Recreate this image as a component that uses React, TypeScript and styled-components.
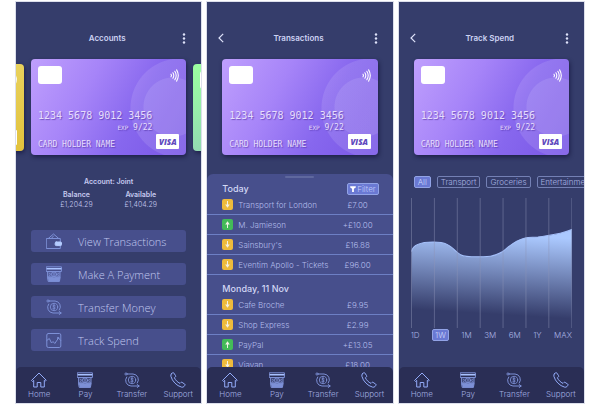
import React from "react";
import styled, { createGlobalStyle, css } from "styled-components";

const GlobalStyle = createGlobalStyle`
  *, *::before, *::after { box-sizing: border-box; }
  body {
    margin: 0;
    background: #ffffff;
    font-family: Inter, "Open Sans", sans-serif;
    color: #c5caf0;
  }
  h1, h2, ul, dl, dd, p { margin: 0; padding: 0; }
  button { font: inherit; color: inherit; cursor: pointer; }
`;

/* ---------- layout ---------- */

const Board = styled.main`
  display: grid;
  grid-template-columns: repeat(3, minmax(0, 1fr));
  gap: 6px;
  height: 100vh;
  min-height: 400px;
  padding: 2px 16px;
`;

const Phone = styled.section`
  display: flex;
  flex-direction: column;
  min-height: 0;
  overflow: hidden;
  background: #353d6b;
  box-shadow: 0 0 0 1px #dcdfeb;
`;

const Header = styled.header`
  display: grid;
  grid-template-columns: 16px 1fr 16px;
  align-items: center;
  flex: none;
  padding: 28px 9px 13px 6px;
`;

const Title = styled.h1`
  grid-column: 2;
  font-size: 8px;
  line-height: 16px;
  font-weight: 600;
  text-align: center;
  color: #cdd3f3;
`;

const IconButton = styled.button`
  display: flex;
  align-items: center;
  justify-content: center;
  height: 16px;
  padding: 0;
  border: 0;
  background: none;
  color: #dfe3fa;
`;

const Body = styled.div`
  display: flex;
  flex-direction: column;
  flex: 1;
  min-height: 0;
`;

/* ---------- bank card ---------- */

const Carousel = styled.div`
  display: flex;
  justify-content: center;
  align-items: center;
  flex: none;
  gap: 7px;
`;

type Tone = "violet" | "gold" | "mint";

const toneFill: Record<Tone, string> = {
  violet: "linear-gradient(118deg, #bf9ffd 0%, #a684f8 35%, #8767ee 65%, #7957e6 100%)",
  gold: "linear-gradient(150deg, #efe28a 0%, #e8d05a 50%, #e2c23c 100%)",
  mint: "linear-gradient(170deg, #9bffa0 0%, #97ecab 45%, #90cfb6 100%)",
};

const CardShell = styled.article<{ $tone: Tone; $peek?: boolean }>`
  display: grid;
  grid-template-columns: 1fr auto;
  grid-template-rows: auto 1fr auto;
  flex: none;
  width: ${(p) => (p.$peek ? "140px" : "calc(100% - 30px)")};
  height: ${(p) => (p.$peek ? "87px" : "96px")};
  padding: 7px 7px 6px;
  border-radius: 4px;
  overflow: hidden;
  color: #e6ddfb;
  font-family: "DejaVu Sans Mono", monospace;
  text-shadow: 1px 1px 1px rgba(60, 30, 140, 0.5);
  box-shadow: 1px 2px 4px rgba(20, 20, 60, 0.7);
  background: ${(p) =>
    p.$tone === "violet"
      ? `radial-gradient(circle 30px at 142px 48px, rgba(255,255,255,0.1) 97%, transparent),
         radial-gradient(circle 50px at 149px 49px, rgba(255,255,255,0.11) 98%, transparent),
         ${toneFill.violet}`
      : toneFill[p.$tone]};
`;

const Chip = styled.div`
  width: 24px;
  height: 18px;
  border-radius: 3px;
  background: #ffffff;
`;

const Wave = styled.div`
  display: flex;
  align-items: center;
  justify-content: flex-end;
  height: 18px;
`;

const CardDetails = styled.div`
  grid-column: 1 / -1;
  align-self: end;
  justify-self: start;
  padding-bottom: 1px;
  text-align: right;
`;

const CardNumber = styled.p`
  font-size: 10px;
  line-height: 12px;
  white-space: nowrap;
`;

const Expiry = styled.p`
  font-size: 8px;
  line-height: 11px;
  small { font-size: 6px; }
`;

const Holder = styled.p`
  align-self: end;
  font-size: 8px;
  line-height: 8px;
  white-space: nowrap;
`;

const Visa = styled.div`
  grid-column: 2;
  align-self: end;
  justify-self: end;
  width: 23px;
  height: 15px;
  border-radius: 1px;
  background: #ffffff;
  color: #6048bd;
  font: italic 800 8px/15px "Open Sans", sans-serif;
  text-align: center;
  text-shadow: none;
`;

function ContactlessIcon() {
  return (
    <svg width="9" height="13" viewBox="0 0 9 13" fill="none" stroke="#fff" strokeWidth="1.1" strokeLinecap="round" aria-hidden="true">
      <path d="M1 5.2q.9 1.3 0 2.6M2.9 3.8q1.8 2.7 0 5.4M4.8 2.3q2.8 4.2 0 8.4M6.6 .9q3.4 5.6 0 11.2" />
    </svg>
  );
}

function BankCard() {
  return (
    <CardShell $tone="violet">
      <Chip />
      <Wave><ContactlessIcon /></Wave>
      <CardDetails>
        <CardNumber>1234 5678 9012 3456</CardNumber>
        <Expiry><small>EXP</small> 9/22</Expiry>
      </CardDetails>
      <Holder>CARD HOLDER NAME</Holder>
      <Visa>VISA</Visa>
    </CardShell>
  );
}

function PeekCard({ tone }: { tone: Tone }) {
  return (
    <CardShell $tone={tone} $peek aria-hidden="true">
      <Chip />
      <Wave><ContactlessIcon /></Wave>
      <CardDetails />
      <Visa />
    </CardShell>
  );
}

/* ---------- icons ---------- */

const Glyph = styled.svg`
  display: block;
  flex: none;
  width: 16px;
  height: 16px;
  fill: none;
  stroke: #7d90d6;
  stroke-width: 1;
  stroke-linecap: round;
  stroke-linejoin: round;
`;

const HomeIcon = () => (
  <Glyph viewBox="0 0 16 16" aria-hidden="true">
    <path stroke="#93abf8" d="M.8 8.2 8 1l7.200 7.200-1 1-.9-.8V15H9.800v-4.500H6.200V15H2.700V8.400l-.9.8z" />
  </Glyph>
);

const PayIcon = () => (
  <Glyph viewBox="0 0 16 16" aria-hidden="true">
    <path d="M.6.8h14.800v4.700H.6z" />
    <path d="M1.200 2.800h13.600" stroke="#a9c2ff" strokeWidth="1.600" />
    <path d="M2 5.500h12v5.500H2z" fill="#7d90d6" fillOpacity=".25" />
    <path d="M1.800 11.200h2.700q3.500 1.600 7 0h2.700l-.8 4.200H2.600z" fill="#7d90d6" />
    <circle cx="8" cy="8.300" r="2.500" />
    <path d="M8 7v2.600M3.800 7.200q1.200 1.200 0 2.400M12.200 7.200q-1.200 1.200 0 2.400" />
  </Glyph>
);

const TransferIcon = () => (
  <Glyph viewBox="0 0 16 16" aria-hidden="true">
    <circle cx="8" cy="8" r="3.700" strokeWidth=".9" />
    <path d="M9.300 6.700Q8 5.600 7 6.500q-.6 1 1 1.500t1.100 1.500q-1.100.9-2.400-.1M8 5.400v5.200" strokeWidth=".8" />
    <circle cx="2" cy="2" r="1.100" strokeWidth=".9" />
    <path d="M3.200 2H9a5.700 5.700 0 0 1 4.300 9" />
    <path d="m13.200 12.500 2 1.500-2 1.500M15 14H7a5.700 5.700 0 0 1-4.300-9" />
  </Glyph>
);

const PhoneIcon = () => (
  <Glyph viewBox="0 0 16 16" aria-hidden="true">
    <path stroke="#93abf8" d="M1.300 1.900 2.700.8q.7-.4 1.200.3l1.700 2.600q.4.7-.2 1.200l-1 .8q.6 1.700 2.100 3.200t3.500 2.500l.9-.9q.6-.5 1.200-.1l2.600 1.700q.7.500.2 1.200l-1 1.300q-.8.900-2.400.5-3.600-1-6.600-4T.9 4.300Q.5 2.700 1.300 1.900z" />
  </Glyph>
);

const WalletIcon = () => (
  <Glyph viewBox="0 0 16 16" aria-hidden="true">
    <path d="M.7 5.500h13.600v10H.7zM2.500 5.300 7.500 1l5 4.300M5.500 5.300 7.500 3" />
    <rect x="9.200" y="9" width="6.300" height="3.600" rx="1" fill="#b4ccff" stroke="#b4ccff" />
  </Glyph>
);

const TrackIcon = () => (
  <Glyph viewBox="0 0 16 16" aria-hidden="true">
    <rect x=".8" y="1.500" width="14" height="14" rx="1.500" />
    <path d="m.8 8.500 2.500-2 2.200 4.500 1.500-1.500 1.800 2 3.700-5.500 2.200 2.500" />
    <circle cx="12" cy="6" r=".7" />
  </Glyph>
);

/* ---------- bottom navigation ---------- */

const NavBar = styled.nav`
  display: grid;
  grid-template-columns: repeat(4, 1fr);
  flex: none;
  margin-top: -5px;
  padding: 5px 0 3px;
  border-radius: 5px 5px 0 0;
  background: #2a2e55;
  position: relative;
  z-index: 1;
`;

const NavLink = styled.a`
  display: flex;
  flex-direction: column;
  align-items: center;
  gap: 1px;
  color: #a3aee0;
  font-size: 8px;
  line-height: 11px;
  font-weight: 300;
  text-decoration: none;
`;

function BottomNav() {
  return (
    <NavBar aria-label="Main">
      <NavLink href="#home"><HomeIcon />Home</NavLink>
      <NavLink href="#pay"><PayIcon />Pay</NavLink>
      <NavLink href="#transfer"><TransferIcon />Transfer</NavLink>
      <NavLink href="#support"><PhoneIcon />Support</NavLink>
    </NavBar>
  );
}

function TopBar({ title, back }: { title: string; back?: boolean }) {
  return (
    <Header>
      {back && (
        <IconButton type="button" aria-label="Back">
          <svg width="6" height="10" viewBox="0 0 6 10" fill="none" stroke="currentColor" strokeWidth="1.200"><path d="M5.200.8 1 5l4.200 4.200" /></svg>
        </IconButton>
      )}
      <Title>{title}</Title>
      <IconButton type="button" aria-label="More options">
        <svg width="4" height="11" viewBox="0 0 4 11" fill="currentColor"><circle cx="2" cy="1.500" r="1.200" /><circle cx="2" cy="5.500" r="1.200" /><circle cx="2" cy="9.500" r="1.200" /></svg>
      </IconButton>
    </Header>
  );
}

/* ---------- accounts ---------- */

const Summary = styled.div`
  padding: 22px 38px 0;
  text-align: center;
  font-size: 7px;
  line-height: 10px;
`;

const AccountName = styled.h2`
  margin-bottom: 3px;
  font-size: 7px;
  line-height: 10px;
  font-weight: 600;
`;

const Figures = styled.dl`
  display: grid;
  grid-template-columns: auto auto;
  justify-content: center;
  gap: 32px;
  dt { font-weight: 600; }
  dd { font-weight: 300; }
`;

const Actions = styled.div`
  display: grid;
  gap: 11px;
  padding: 20px 15px 0;
`;

const ActionButton = styled.button`
  display: flex;
  align-items: center;
  gap: 16px;
  height: 22px;
  padding: 0 15px;
  border: 0;
  border-radius: 3px;
  background: #474f8c;
  color: #c0c7ee;
  font-family: "Open Sans", sans-serif;
  font-size: 11px;
  font-weight: 300;
  white-space: nowrap;
`;

function AccountsScreen() {
  return (
    <Phone>
      <TopBar title="Accounts" />
      <Body>
        <Carousel>
          <PeekCard tone="gold" />
          <BankCard />
          <PeekCard tone="mint" />
        </Carousel>
        <Summary>
          <AccountName>Account: Joint</AccountName>
          <Figures>
            <div><dt>Balance</dt><dd>£1,204.29</dd></div>
            <div><dt>Available</dt><dd>£1,404.29</dd></div>
          </Figures>
        </Summary>
        <Actions>
          <ActionButton type="button"><WalletIcon />View Transactions</ActionButton>
          <ActionButton type="button"><PayIcon />Make A Payment</ActionButton>
          <ActionButton type="button"><TransferIcon />Transfer Money</ActionButton>
          <ActionButton type="button"><TrackIcon />Track Spend</ActionButton>
        </Actions>
      </Body>
      <BottomNav />
    </Phone>
  );
}

/* ---------- transactions ---------- */

const Sheet = styled.div`
  flex: 1;
  min-height: 0;
  margin-top: 19px;
  padding-top: 2px;
  overflow: hidden;
  border-radius: 6px 6px 0 0;
  background: #474f8c;
`;

const Handle = styled.div`
  width: 29px;
  height: 2px;
  margin: 0 auto 5px;
  border-radius: 1px;
  background: #5f689e;
`;

const DayHeader = styled.div`
  display: flex;
  align-items: center;
  justify-content: space-between;
  height: 12px;
  padding: 0 14px 0 15px;
  h2 {
    font-size: 9px;
    line-height: 12px;
    font-weight: 500;
    color: #d3d8f5;
  }
`;

const FilterButton = styled.button`
  display: flex;
  align-items: center;
  gap: 1px;
  height: 12px;
  padding: 0 2px;
  border: 1px solid #92a3e6;
  border-radius: 2px;
  background: #6a79d3;
  color: #c3cefb;
  font-size: 8px;
  line-height: 10px;
  font-weight: 300;
`;

const List = styled.ul`
  margin-bottom: 8px;
  list-style: none;
`;

const Row = styled.li`
  display: grid;
  grid-template-columns: 11px 1fr 42px;
  align-items: center;
  column-gap: 5px;
  height: 20px;
  padding: 0 14px 0 15px;
  border-bottom: 1px solid #6d7fc4;
  color: #b3bceb;
  font-size: 8px;
  font-weight: 300;
  white-space: nowrap;
`;

const Amount = styled.span`
  text-align: center;
`;

const Direction = styled.span<{ $in: boolean }>`
  display: flex;
  align-items: center;
  justify-content: center;
  height: 11px;
  border-radius: 2px;
  background: ${(p) => (p.$in ? "#43bb58" : "#eebb3c")};
  svg { transform: ${(p) => (p.$in ? "rotate(180deg)" : "none")}; }
`;

type Entry = { name: string; amount: string };

const today: Entry[] = [
  { name: "Transport for London", amount: "£7.00" },
  { name: "M. Jamieson", amount: "+£10.00" },
  { name: "Sainsbury's", amount: "£16.88" },
  { name: "Eventim Apollo - Tickets", amount: "£96.00" },
];

const monday: Entry[] = [
  { name: "Cafe Broche", amount: "£9.95" },
  { name: "Shop Express", amount: "£2.99" },
  { name: "PayPal", amount: "+£13.05" },
  { name: "Viavan", amount: "£18.00" },
];

function Entries({ items }: { items: Entry[] }) {
  return (
    <List>
      {items.map((t) => (
        <Row key={t.name}>
          <Direction $in={t.amount.startsWith("+")}>
            <svg width="5" height="7" viewBox="0 0 5 7" aria-hidden="true"><path d="M2 0h1v3.500h1.800L2.500 6.800.2 3.500H2z" fill="#f3f1e6" /></svg>
          </Direction>
          {t.name}
          <Amount>{t.amount}</Amount>
        </Row>
      ))}
    </List>
  );
}

function TransactionsScreen() {
  return (
    <Phone>
      <TopBar title="Transactions" back />
      <Body>
        <Carousel><BankCard /></Carousel>
        <Sheet>
          <Handle />
          <DayHeader>
            <h2>Today</h2>
            <FilterButton type="button">
              <svg width="6" height="6" viewBox="0 0 6 6" aria-hidden="true"><path d="M.2.300h5.600v1.200L3.900 2.800V6H2.100V2.800L.2 1.500z" fill="#fff" /></svg>
              Filter
            </FilterButton>
          </DayHeader>
          <Entries items={today} />
          <DayHeader><h2>Monday, 11 Nov</h2></DayHeader>
          <Entries items={monday} />
        </Sheet>
      </Body>
      <BottomNav />
    </Phone>
  );
}

/* ---------- track spend ---------- */

const selectedPill = css`
  border-color: #92a3e6;
  background: #6a79d3;
  color: #ccd6fc;
`;

const Filters = styled.div`
  display: flex;
  flex: none;
  gap: 6px;
  margin-top: 21px;
  padding-left: 15px;
  overflow: hidden;
`;

const Pill = styled.button<{ $on?: boolean }>`
  flex: none;
  height: 12px;
  padding: 0 3px;
  border: 1px solid #7480b4;
  border-radius: 2px;
  background: none;
  color: #a9b3e2;
  font-size: 8px;
  line-height: 10px;
  font-weight: 300;
  ${(p) => p.$on && selectedPill}
`;

const ChartBox = styled.div`
  margin: 10px 12px 0;
  svg { display: block; width: 100%; height: 130px; }
`;

const Ranges = styled.div`
  display: flex;
  justify-content: space-between;
  align-items: center;
  margin: 1px 12px 0;
`;

const RangeButton = styled.button<{ $on?: boolean }>`
  height: 12px;
  padding: ${(p) => (p.$on ? "0 2px" : "0")};
  border: ${(p) => (p.$on ? "1px solid" : "0")};
  border-radius: 2px;
  background: none;
  color: #a9b3e2;
  font-size: 8px;
  line-height: 10px;
  font-weight: 300;
  ${(p) => p.$on && selectedPill}
`;

const curve =
  "M.5 53.500C2 46 12 44 22 44C36 44 39 48 45.500 54C50 58 53 58.700 60 58.700H72C80 58.700 87 56 91 53.500C98 48 102 43 113 40C117 38.800 121 39.500 126 39C136 37.500 150 36 159.500 31.500";
const gridX = [0.5, 23.2, 45.9, 68.6, 91.3, 114, 136.7, 159.5];

function SpendChart() {
  return (
    <ChartBox>
      <svg viewBox="0 0 160 130" preserveAspectRatio="none" role="img" aria-label="Spending over time">
        <defs>
          <linearGradient id="spend" gradientUnits="userSpaceOnUse" x1="85" y1="36" x2="80" y2="116">
            <stop offset="0" stopColor="#abc9ff" />
            <stop offset="1" stopColor="#abc9ff" stopOpacity="0" />
          </linearGradient>
        </defs>
        <path d={`${curve}V130H.5Z`} fill="url(#spend)" />
        <path d={curve} fill="none" stroke="#a5c0fa" />
        {gridX.map((x) => (
          <path key={x} d={`M${x} 0V130`} stroke="#8d95b5" strokeOpacity=".45" />
        ))}
      </svg>
    </ChartBox>
  );
}

const categories = ["All", "Transport", "Groceries", "Entertainment"];
const ranges = ["1D", "1W", "1M", "3M", "6M", "1Y", "MAX"];

function TrackSpendScreen() {
  return (
    <Phone>
      <TopBar title="Track Spend" back />
      <Body>
        <Carousel><BankCard /></Carousel>
        <Filters>
          {categories.map((c) => (
            <Pill key={c} type="button" $on={c === "All"} aria-pressed={c === "All"}>{c}</Pill>
          ))}
        </Filters>
        <SpendChart />
        <Ranges>
          {ranges.map((r) => (
            <RangeButton key={r} type="button" $on={r === "1W"} aria-pressed={r === "1W"}>{r}</RangeButton>
          ))}
        </Ranges>
      </Body>
      <BottomNav />
    </Phone>
  );
}

export default function App() {
  return (
    <>
      <GlobalStyle />
      <Board>
        <AccountsScreen />
        <TransactionsScreen />
        <TrackSpendScreen />
      </Board>
    </>
  );
}
